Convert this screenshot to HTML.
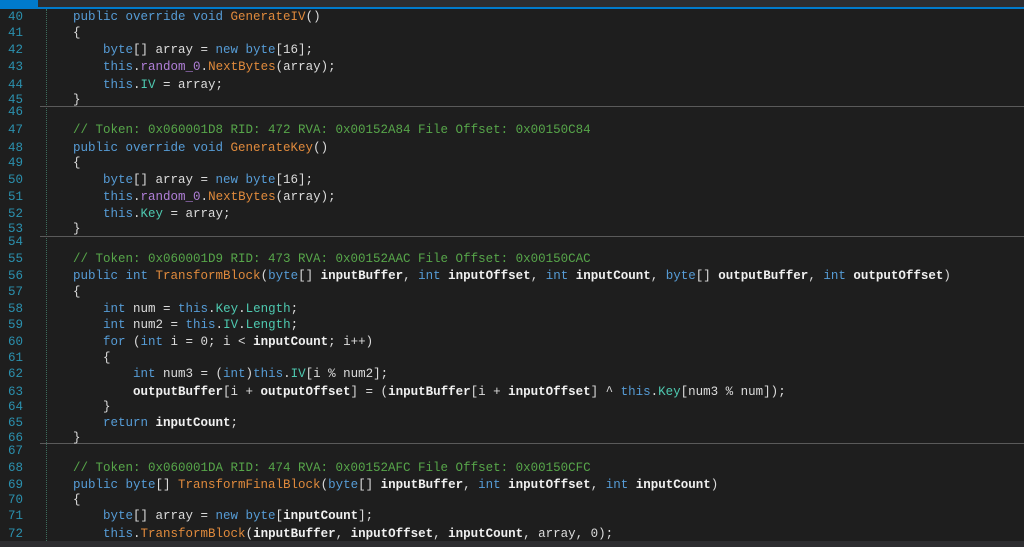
<!DOCTYPE html>
<html><head><meta charset="utf-8"><style>
body{margin:0;width:1024px;height:547px;background:#1e1e1e;overflow:hidden;position:relative;font-family:"Liberation Mono",monospace;font-size:12.5px;color:#dcdcdc}
.top{position:absolute;left:0;top:0;width:1024px;height:7px;background:#2d2d30}
.bl{position:absolute;left:0;top:7px;width:1024px;height:2px;background:#007acc}
.tab{position:absolute;left:0;top:0;width:38px;height:9px;background:#007acc}
.ln{position:absolute;left:8px;color:#2b91af;white-space:pre;margin-top:1px}
.c{position:absolute;white-space:pre;margin-top:1px}
.sep{position:absolute;left:40px;width:984px;height:1px;background:#5a5a5a}
.g{position:absolute;left:46px;top:9px;height:532px;border-left:1px dotted #3e6e5e}
.k{color:#569cd6}.m{color:#e08a3c}.f{color:#b07fd8}.p{color:#4ec9b0}.cm{color:#57a64a}.b{font-weight:bold;color:#f0f0f0}
.bot{position:absolute;left:0;top:541px;width:1024px;height:6px;background:#2d2d30}
</style></head><body>
<div class="top"></div><div class="bl"></div><div class="tab"></div>
<div class="g"></div>
<div class="sep" style="top:106px"></div>
<div class="sep" style="top:236px"></div>
<div class="sep" style="top:443px"></div>
<div class="ln" style="top:9px">40</div><div class="c" style="left:73px;top:9px"><span class="k">public override void</span> <span class="m">GenerateIV</span>()</div>
<div class="ln" style="top:25px">41</div><div class="c" style="left:73px;top:25px">{</div>
<div class="ln" style="top:42px">42</div><div class="c" style="left:103px;top:42px"><span class="k">byte</span>[] array = <span class="k">new byte</span>[16];</div>
<div class="ln" style="top:59px">43</div><div class="c" style="left:103px;top:59px"><span class="k">this</span>.<span class="f">random_0</span>.<span class="m">NextBytes</span>(array);</div>
<div class="ln" style="top:77px">44</div><div class="c" style="left:103px;top:77px"><span class="k">this</span>.<span class="p">IV</span> = array;</div>
<div class="ln" style="top:92px">45</div><div class="c" style="left:73px;top:92px">}</div>
<div class="ln" style="top:104px">46</div>
<div class="ln" style="top:122px">47</div><div class="c cm" style="left:73px;top:122px">// Token: 0x060001D8 RID: 472 RVA: 0x00152A84 File Offset: 0x00150C84</div>
<div class="ln" style="top:140px">48</div><div class="c" style="left:73px;top:140px"><span class="k">public override void</span> <span class="m">GenerateKey</span>()</div>
<div class="ln" style="top:155px">49</div><div class="c" style="left:73px;top:155px">{</div>
<div class="ln" style="top:172px">50</div><div class="c" style="left:103px;top:172px"><span class="k">byte</span>[] array = <span class="k">new byte</span>[16];</div>
<div class="ln" style="top:189px">51</div><div class="c" style="left:103px;top:189px"><span class="k">this</span>.<span class="f">random_0</span>.<span class="m">NextBytes</span>(array);</div>
<div class="ln" style="top:206px">52</div><div class="c" style="left:103px;top:206px"><span class="k">this</span>.<span class="p">Key</span> = array;</div>
<div class="ln" style="top:221px">53</div><div class="c" style="left:73px;top:221px">}</div>
<div class="ln" style="top:234px">54</div>
<div class="ln" style="top:251px">55</div><div class="c cm" style="left:73px;top:251px">// Token: 0x060001D9 RID: 473 RVA: 0x00152AAC File Offset: 0x00150CAC</div>
<div class="ln" style="top:268px">56</div><div class="c" style="left:73px;top:268px"><span class="k">public int</span> <span class="m">TransformBlock</span>(<span class="k">byte</span>[] <span class="b">inputBuffer</span>, <span class="k">int</span> <span class="b">inputOffset</span>, <span class="k">int</span> <span class="b">inputCount</span>, <span class="k">byte</span>[] <span class="b">outputBuffer</span>, <span class="k">int</span> <span class="b">outputOffset</span>)</div>
<div class="ln" style="top:284px">57</div><div class="c" style="left:73px;top:284px">{</div>
<div class="ln" style="top:301px">58</div><div class="c" style="left:103px;top:301px"><span class="k">int</span> num = <span class="k">this</span>.<span class="p">Key</span>.<span class="p">Length</span>;</div>
<div class="ln" style="top:317px">59</div><div class="c" style="left:103px;top:317px"><span class="k">int</span> num2 = <span class="k">this</span>.<span class="p">IV</span>.<span class="p">Length</span>;</div>
<div class="ln" style="top:334px">60</div><div class="c" style="left:103px;top:334px"><span class="k">for</span> (<span class="k">int</span> i = 0; i &lt; <span class="b">inputCount</span>; i++)</div>
<div class="ln" style="top:350px">61</div><div class="c" style="left:103px;top:350px">{</div>
<div class="ln" style="top:366px">62</div><div class="c" style="left:133px;top:366px"><span class="k">int</span> num3 = (<span class="k">int</span>)<span class="k">this</span>.<span class="p">IV</span>[i % num2];</div>
<div class="ln" style="top:384px">63</div><div class="c" style="left:133px;top:384px"><span class="b">outputBuffer</span>[i + <span class="b">outputOffset</span>] = (<span class="b">inputBuffer</span>[i + <span class="b">inputOffset</span>] ^ <span class="k">this</span>.<span class="p">Key</span>[num3 % num]);</div>
<div class="ln" style="top:399px">64</div><div class="c" style="left:103px;top:399px">}</div>
<div class="ln" style="top:415px">65</div><div class="c" style="left:103px;top:415px"><span class="k">return</span> <span class="b">inputCount</span>;</div>
<div class="ln" style="top:430px">66</div><div class="c" style="left:73px;top:430px">}</div>
<div class="ln" style="top:443px">67</div>
<div class="ln" style="top:460px">68</div><div class="c cm" style="left:73px;top:460px">// Token: 0x060001DA RID: 474 RVA: 0x00152AFC File Offset: 0x00150CFC</div>
<div class="ln" style="top:477px">69</div><div class="c" style="left:73px;top:477px"><span class="k">public byte</span>[] <span class="m">TransformFinalBlock</span>(<span class="k">byte</span>[] <span class="b">inputBuffer</span>, <span class="k">int</span> <span class="b">inputOffset</span>, <span class="k">int</span> <span class="b">inputCount</span>)</div>
<div class="ln" style="top:492px">70</div><div class="c" style="left:73px;top:492px">{</div>
<div class="ln" style="top:508px">71</div><div class="c" style="left:103px;top:508px"><span class="k">byte</span>[] array = <span class="k">new byte</span>[<span class="b">inputCount</span>];</div>
<div class="ln" style="top:526px">72</div><div class="c" style="left:103px;top:526px"><span class="k">this</span>.<span class="m">TransformBlock</span>(<span class="b">inputBuffer</span>, <span class="b">inputOffset</span>, <span class="b">inputCount</span>, array, 0);</div>
<div class="bot"></div>
</body></html>
